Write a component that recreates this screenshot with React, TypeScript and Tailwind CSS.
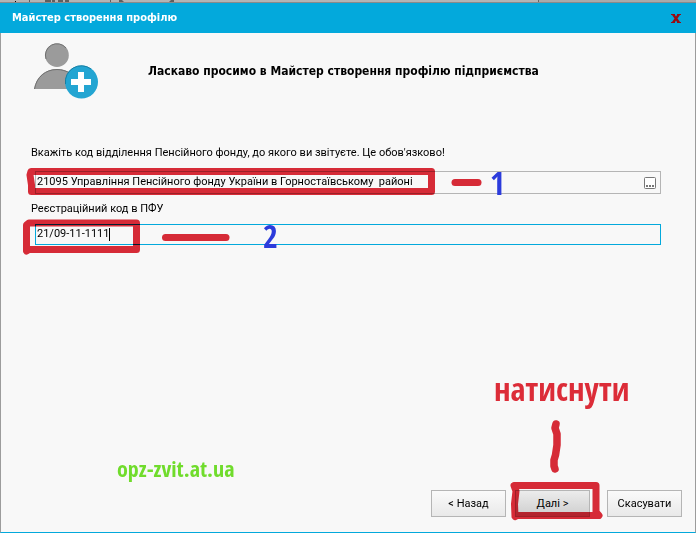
import { useState } from 'react';

const sans = "font-['Roboto','DejaVu_Sans_Condensed',sans-serif]";
const heading = "font-['DejaVu_Sans_Condensed','DejaVu_Sans',sans-serif]";
const narrow = "font-['Open_Sans_Condensed','Roboto_Condensed','Liberation_Sans_Narrow','DejaVu_Sans_Condensed',sans-serif]";

const button = 'h-[27px] w-[75px] border border-[#b5b5b5] text-center text-[11px] leading-4 text-black';

const UserAddIcon = () => (
  <svg width="65" height="56" viewBox="0 0 65 56" aria-hidden="true">
    <circle cx="23" cy="12.200" r="11.800" fill="#9b9b9b" />
    <path d="M12 16A11.600 11.600 0 0 1 32 5" fill="none" stroke="#707070" strokeWidth="1" />
    <path d="M0 46C2 34 11 26 23 26S44 34 46 46Z" fill="#9b9b9b" />
    <path d="M.5 46C2.500 34 11.500 26.500 23 26.500C28 26.500 32 28 36 30" fill="none" stroke="#707070" strokeWidth="1" />
    <circle cx="47.500" cy="39" r="16.500" fill="#23a5d2" />
    <path d="M31.500 41A16 16 0 0 1 57 26" fill="none" stroke="#187fa3" strokeWidth="1" />
    <path d="M44 29h6v7h7v6h-7v7h-6v-7h-7v-6h7Z" fill="#fff" />
  </svg>
);

const App = () => {
  const [department, setDepartment] = useState('21095 Управління Пенсійного фонду України в Горностаївському  районі');
  const [code, setCode] = useState('21/09-11-1111');

  return (
    <div className={`flex min-h-screen flex-col bg-[#f8f8f8] text-black ${sans}`}>
      {/* window behind the wizard */}
      <div className="flex h-[3px] justify-between border-b border-[#8a8a8a] bg-[#b4b4b4]">
        <svg width="180" height="2" viewBox="0 0 180 2" aria-hidden="true">
          <path d="M15 1h1v1h-1Z" fill="#000" />
          <path d="M29 0h1v2h-1ZM45 0h6v2h-6ZM52 0h3v2h-3ZM58 0h5v2h-5ZM65 0h4v2h-4ZM110 0h1v2h-1ZM119 0h3l2 2h-5ZM171 0h3v2h-5Z" fill="#5f5f5f" />
        </svg>
        <div className="h-[2px] w-[158px] border-l border-[#666] bg-[#aaa]" />
      </div>

      <header className="flex h-[30px] items-center justify-between bg-[#03a9dc] px-3">
        <h1 className={`text-[11px] leading-4 font-bold text-white ${heading}`}>Майстер створення профілю</h1>
        <button type="button" aria-label="Закрити" className="flex size-4 items-center justify-center">
          <svg width="10" height="9" viewBox="0 0 10 9" aria-hidden="true">
            <path d="M0 0H4V1L5 2.500L6 1V0H10V1H9L6.500 4.500L9 8H10V9H6V8L5 6.500L4 8V9H0V8H1L3.500 4.500L1 1H0Z" fill="#990c12" />
          </svg>
        </button>
      </header>

      <main className="flex flex-1 flex-col border-x border-b border-x-[#9c9c9c] border-b-[#03a9dc]">
        <div className="flex h-[112px] items-start pt-[10px] pl-[33px]">
          <UserAddIcon />
          <h2 className={`mt-5 ml-[49px] text-[12px] leading-4 font-bold ${heading}`}>
            Ласкаво просимо в Майстер створення профілю підприємства
          </h2>
        </div>

        <form className="flex flex-1 flex-col" onSubmit={(e) => e.preventDefault()}>
          <div className="pr-[34px] pl-[30px] text-[11px] leading-4">
            <label htmlFor="department" className="block">
              Вкажіть код відділення Пенсійного фонду, до якого ви звітуєте. Це обов'язково!
            </label>
            <div className="relative mt-[10px] ml-1 flex h-[23px] items-center border border-[#b5b5b5] pr-1">
              <input
                id="department"
                value={department}
                onChange={(e) => setDepartment(e.target.value)}
                className="min-w-0 flex-1 pb-0.5 pl-px whitespace-pre outline-none"
              />
              <button type="button" aria-label="Вибрати" className="size-3">
                <svg width="12" height="12" viewBox="0 0 12 12" aria-hidden="true">
                  <rect x=".5" y=".5" width="11" height="11" rx="1" fill="#fff" stroke="#777" />
                  <path d="M2 8h2v2H2ZM5 8h2v2H5ZM8 8h2v2H8Z" fill="#777" />
                </svg>
              </button>
              <svg className="pointer-events-none absolute -top-[6px] -left-[10px] mix-blend-multiply" width="465" height="34" viewBox="0 0 465 34" aria-hidden="true">
                <path d="M4 9L5 5.500H405.500V25.500H5.500V19Z" fill="none" stroke="#dc2c38" strokeWidth="7" strokeLinejoin="round" />
                <path d="M429 16.500H452" stroke="#dc2c38" strokeWidth="7" strokeLinecap="round" />
              </svg>
              <span className={`pointer-events-none absolute -top-[5px] left-[454px] text-[32px] leading-8 font-bold text-[#2c3cdc] ${narrow}`}>1</span>
            </div>

            <label htmlFor="code" className="mt-[7px] block">Реєстраційний код в ПФУ</label>
            <div className="relative mt-[7px] ml-1 flex h-[21px] items-center border border-[#03a9dc]">
              <input
                id="code"
                value={code}
                onChange={(e) => setCode(e.target.value)}
                className="field-sizing-content max-w-full pb-px pl-px caret-transparent outline-none"
              />
              <span className="h-[13px] w-px bg-black" />
              <svg className="pointer-events-none absolute -top-[6px] -left-[13px] mix-blend-multiply" width="215" height="40" viewBox="0 0 215 40" aria-hidden="true">
                <path d="M3.500 6L6 4H113.500V30.500H6L3.500 32Z" fill="none" stroke="#dc2c38" strokeWidth="7" strokeLinejoin="round" />
                <path d="M142.500 18.500H203" stroke="#dc2c38" strokeWidth="7" strokeLinecap="round" />
              </svg>
              <span className={`pointer-events-none absolute -top-[5px] left-[227px] text-[32px] leading-8 font-bold text-[#2c3cdc] ${narrow}`}>2</span>
            </div>
          </div>

          <div className="mt-auto flex items-end justify-between pr-[13px] pb-[15px]">
            <p className={`mb-[37px] ml-[116px] text-[22px] leading-6 font-bold text-[#70dc2c] ${narrow}`}>opz-zvit.at.ua</p>
            <div className="flex">
              <button type="button" className={`${button} bg-linear-to-b from-[#fafafa] to-[#e9e9e9]`}>&lt; Назад</button>
              <div className="relative mr-[17px] ml-[9px] flex">
                <button type="submit" className={`${button} bg-linear-to-b from-[#ececec] to-[#cecece]`}>Далі &gt;</button>
                <svg className="pointer-events-none absolute -top-[72px] -left-[5px] mix-blend-multiply" width="96" height="104" viewBox="0 0 96 104" aria-hidden="true">
                  <path d="M46 6L45 10L47 16V27L45.500 37L44 42V48L45 51" fill="none" stroke="#dc2c38" strokeWidth="7.500" strokeLinecap="round" strokeLinejoin="round" />
                  <path d="M4 67.500H86V94L89 97.500H7L5 98.500L4.500 86L6 73Z" fill="none" stroke="#dc2c38" strokeWidth="7" strokeLinejoin="round" />
                </svg>
                <span className={`pointer-events-none absolute -top-[121px] -left-[21px] text-[32px] leading-10 font-bold text-[#dc2c38] ${narrow}`}>натиснути</span>
              </div>
              <button type="button" className={`${button} bg-linear-to-b from-[#fafafa] to-[#e9e9e9]`}>Скасувати</button>
            </div>
          </div>
        </form>
      </main>
    </div>
  );
};

export default App;
